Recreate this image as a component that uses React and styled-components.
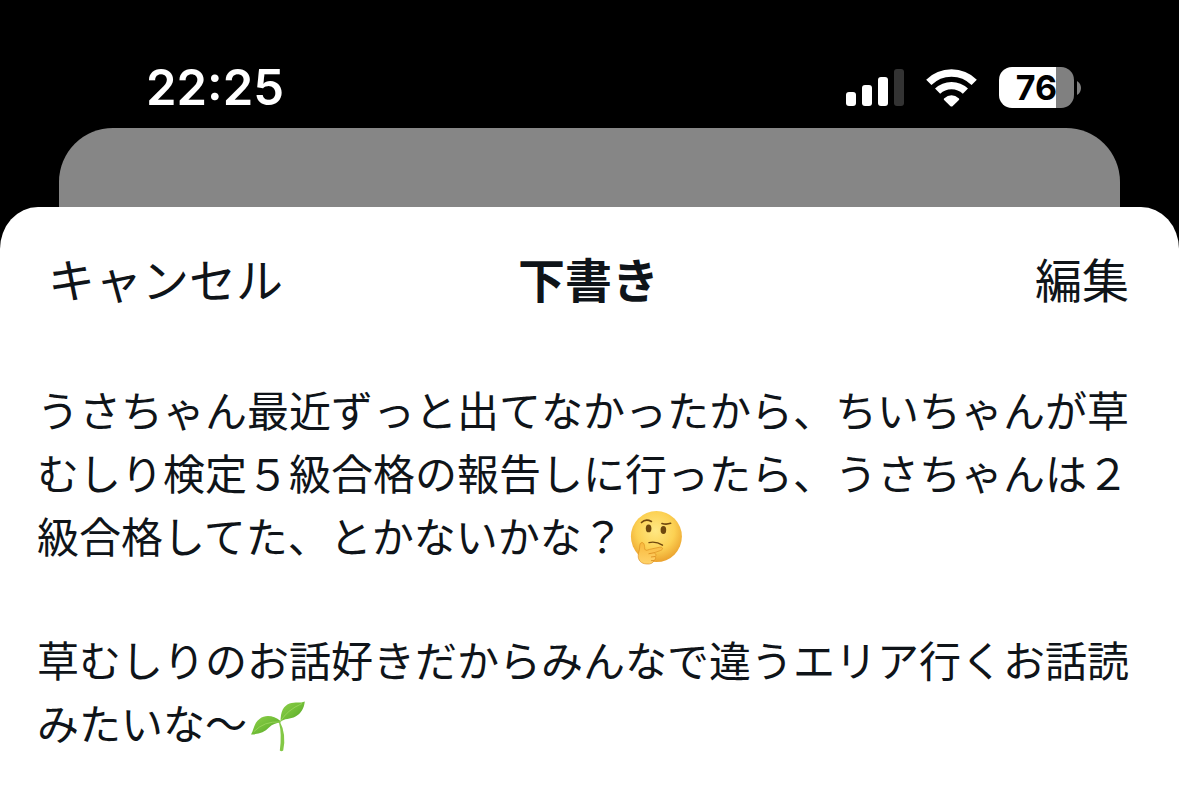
import React from 'react'
import styled, { createGlobalStyle } from 'styled-components'

const GlobalStyle = createGlobalStyle`
    * {
        box-sizing : border-box;
    }
    body {
        margin : 0;
        background-color : #000;
        font-family : Inter, "Noto Sans CJK JP", sans-serif;
    }
`;

const Screen = styled.div`
    display : flex;
    flex-direction : column;
    min-height : 100vh;
`;

const StatusBar = styled.header`
    display : flex;
    justify-content : space-between;
    align-items : center;
    height : 128px;
    padding : 47px 98px 0 146px;
    color : #fff;
`;

const Clock = styled.time`
    font-size : 49px;
    font-weight : 600;
    line-height : 60px;
`;

const StatusIcons = styled.div`
    display : flex;
    align-items : center;
    gap : 22px;
`;

const Battery = styled.div`
    display : flex;
    align-items : center;
    gap : 3px;
`;

const BatteryBody = styled.div`
    width : 75px;
    height : 41px;
    border-radius : 13px;
    background : linear-gradient(to right, #fff ${props => props.$level}%, #808080 ${props => props.$level}%);
    color : #000;
    font-size : 34px;
    font-weight : 700;
    line-height : 41px;
    text-align : center;
`;

const BackCard = styled.div`
    height : 79px;
    margin : 0 5%;
    border-radius : 54px 54px 0 0;
    background-color : #868686;
`;

const Sheet = styled.main`
    flex : 1;
    border-radius : 38px 38px 0 0 / 42px 42px 0 0;
    background-color : #fff;
    color : #0f1419;
`;

const SheetHeader = styled.div`
    display : grid;
    grid-template-columns : 1fr auto 1fr;
    align-items : center;
    padding : 40px 50px 0 48px;
`;

const HeaderButton = styled.button`
    justify-self : ${props => props.$end ? 'end' : 'start'};
    padding : 0;
    border : 0;
    background : none;
    color : inherit;
    font-family : inherit;
    font-size : 47px;
    line-height : 68px;
    cursor : pointer;
`;

const Title = styled.h1`
    margin : 0;
    font-size : 47px;
    font-weight : 700;
    line-height : 68px;
`;

const Draft = styled.article`
    display : flex;
    flex-direction : column;
    gap : 61px;
    padding : 62px 48px 40px 37px;
`;

const Paragraph = styled.p`
    margin : 0;
    font-size : 42px;
    line-height : 63px;
    font-family : "Noto Sans CJK JP", sans-serif;
`;

const Emoji = styled.svg`
    width : 54px;
    height : 54px;
    margin : 0 2px 0 4px;
    vertical-align : -12px;
`;

const SignalIcon = () => (
    <svg width="58" height="38" viewBox="0 0 58 38" fill="#fff" role="img" aria-label="電波">
        <rect x="0" y="23" width="10" height="14" rx="3" />
        <rect x="16" y="16" width="10" height="21" rx="3" />
        <rect x="32" y="8" width="10" height="29" rx="3" />
        <rect x="48" y="0" width="10" height="37" rx="3" fill="#333" />
    </svg>
);

const WifiIcon = () => (
    <svg width="51" height="38" viewBox="0 0 51 38" role="img" aria-label="Wi-Fi">
        <g fill="none" stroke="#fff" strokeWidth="7.4">
            <path d="M2.8 13.4 A32 32 0 0 1 48.2 13.4" />
            <path d="M11.6 22.2 A20 20 0 0 1 39.4 22.2" />
        </g>
        <path d="M18 29.4 Q25.5 23.2 33 29.4 Q33.6 30.3 32.9 31 L26.5 37.2 Q25.5 38 24.5 37.2 L18.1 31 Q17.4 30.3 18 29.4 Z" fill="#fff" />
    </svg>
);

const ThinkingEmoji = () => (
    <Emoji viewBox="-3 0 54 54" role="img" aria-label="考える顔">
        <defs>
            <radialGradient id="face" cx="48%" cy="38%" r="62%">
                <stop offset="0" stopColor="#ffe884" />
                <stop offset="0.6" stopColor="#fcd153" />
                <stop offset="1" stopColor="#eba22e" />
            </radialGradient>
            <linearGradient id="hand" x1="0" y1="0" x2="0" y2="1">
                <stop offset="0" stopColor="#f8b83c" />
                <stop offset="1" stopColor="#ffd36a" />
            </linearGradient>
        </defs>
        <circle cx="25.4" cy="25.6" r="25.5" fill="url(#face)" />
        <ellipse cx="17.6" cy="17.4" rx="2.8" ry="3.9" fill="#6e480e" />
        <ellipse cx="32.4" cy="19" rx="2.8" ry="3.9" fill="#6e480e" />
        <g fill="none" stroke="#70480f" strokeLinecap="round">
            <path d="M10.5 11.5 Q14.5 7.5 20.4 10.4" strokeWidth="1.7" />
            <path d="M31 12.5 Q35.5 13.7 39.6 12.3" strokeWidth="1.7" />
            <path d="M18 31.6 Q25 30 31.5 34.2" strokeWidth="1.4" />
        </g>
        <path
            d="M11 31.5 C13 31.6 13.7 34 13.7 38 C14.4 40 16.4 39.2 18.4 38.4 L28.7 36.2 C32 35.7 32.5 38.5 29.5 39.5 L23.2 41.7 C25.2 42.8 25.4 44.5 24.3 45.5 C25.2 47.5 24.5 48.8 22.9 49.5 C22.1 52.4 19.2 53.3 15.7 53 C9.7 52.7 7 49 7.2 44.5 C7.3 41.4 8.5 40.2 8.7 36 C8.6 33.2 9.4 31.7 11 31.5 Z"
            fill="url(#hand)"
            stroke="#d88819"
            strokeWidth="0.6"
        />
        <path d="M17.5 42.8 L23.2 41.7 M20 46 L24.3 45.5 M20 49.6 L22.9 49.5" stroke="#d88819" strokeWidth="0.8" fill="none" />
    </Emoji>
);

const SeedlingEmoji = () => (
    <Emoji viewBox="1 0 54 54" role="img" aria-label="芽">
        <defs>
            <linearGradient id="leaf" x1="0" y1="0" x2="1" y2="1">
                <stop offset="0" stopColor="#8fd04a" />
                <stop offset="0.55" stopColor="#6fbc36" />
                <stop offset="1" stopColor="#529f25" />
            </linearGradient>
        </defs>
        <path d="M29.6 23 Q36.6 36 33.2 52.6 Q31.5 54 29.8 52.6 Q32 36 29 24.5 Z" fill="#83c845" />
        <path d="M30.5 23 C24 18 16 16 9.5 21 C3.5 25.5 4 32 1 36.5 C9 36.5 14.5 34 19 29.5 C22.5 26 26 25 30.5 24.5 Z" fill="url(#leaf)" />
        <path d="M30.5 24 C30.5 13 33.5 8 39.5 5.5 C45 3.5 50.5 5.5 54.8 3.5 C54 10.5 51 15.5 45.5 18.5 C40.5 21.5 34 20 30.5 24 Z" fill="url(#leaf)" />
        <path d="M4 33.5 Q14 23 30 24 Q37 12 52 5.5" fill="none" stroke="#9fd860" strokeWidth="0.8" />
    </Emoji>
);

const App = () =>{
    return (
        <>
        <GlobalStyle />
        <Screen>
            <StatusBar>
                <Clock>22:25</Clock>
                <StatusIcons>
                    <SignalIcon />
                    <WifiIcon />
                    <Battery>
                        <BatteryBody $level={76}>76</BatteryBody>
                        <svg width="4" height="14" viewBox="0 0 4 14" aria-hidden="true">
                            <path d="M0 0 Q4 2.5 4 7 Q4 11.5 0 14 Z" fill="#808080" />
                        </svg>
                    </Battery>
                </StatusIcons>
            </StatusBar>
            <BackCard />
            <Sheet>
                <SheetHeader>
                    <HeaderButton type="button">キャンセル</HeaderButton>
                    <Title>下書き</Title>
                    <HeaderButton type="button" $end>編集</HeaderButton>
                </SheetHeader>
                <Draft lang="ja">
                    <Paragraph>
                        うさちゃん最近ずっと出てなかったから、ちいちゃんが草むしり検定５級合格の報告しに行ったら、うさちゃんは２級合格してた、とかないかな？<ThinkingEmoji />
                    </Paragraph>
                    <Paragraph>
                        草むしりのお話好きだからみんなで違うエリア行くお話読みたいな〜<SeedlingEmoji />
                    </Paragraph>
                </Draft>
            </Sheet>
        </Screen>
        </>
    )
};

export default App;
